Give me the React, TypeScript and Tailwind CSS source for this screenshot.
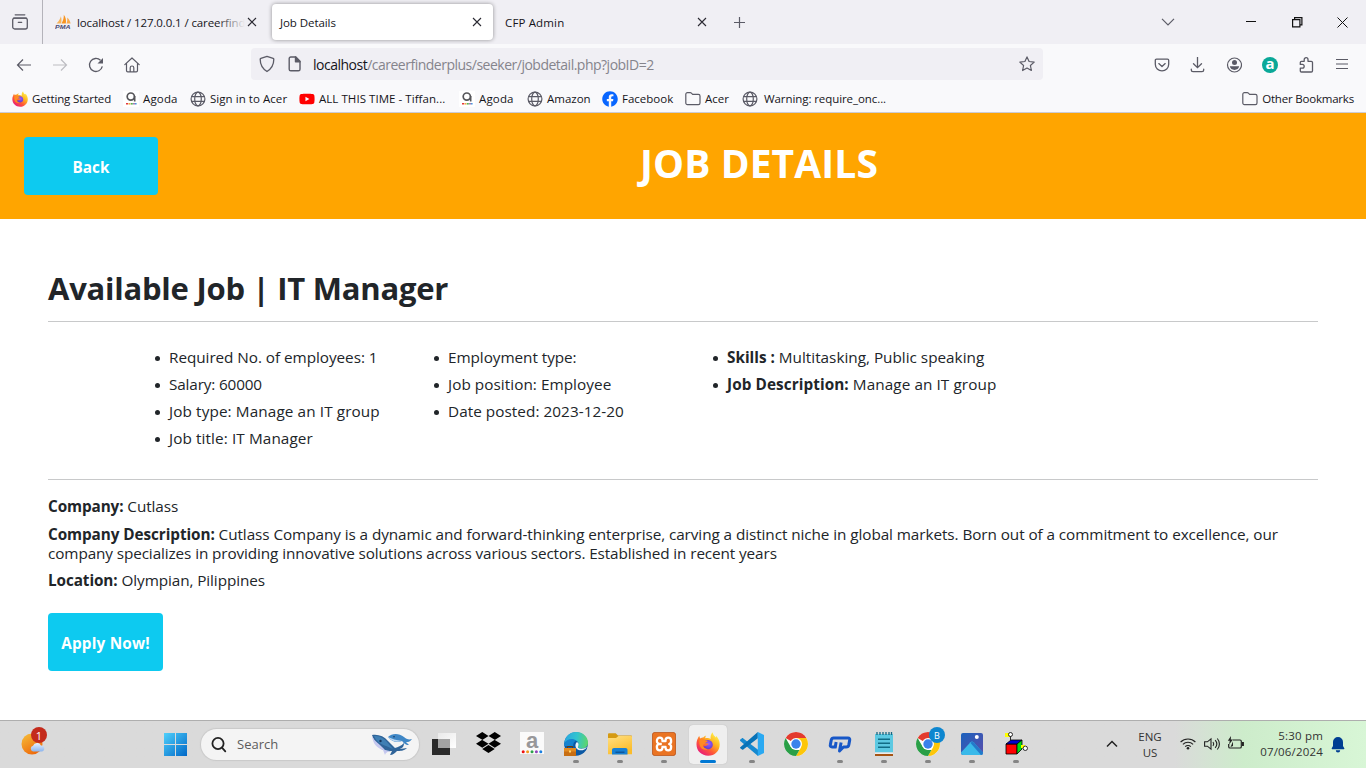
import React from 'react';
import type { ReactNode } from 'react';
import { FaDropbox, FaFacebook, FaYoutube } from 'react-icons/fa';

function Firefox({ size }: { size: number }) {
  return (
    <svg width={size} height={size} viewBox="0 0 24 24">
      <defs>
        <linearGradient id="ffBody" x1="0.85" y1="0.1" x2="0.2" y2="0.95">
          <stop offset="0" stopColor="#fff04a" />
          <stop offset="0.35" stopColor="#ffb21f" />
          <stop offset="0.65" stopColor="#ff5a36" />
          <stop offset="1" stopColor="#e8187c" />
        </linearGradient>
        <radialGradient id="ffCore" cx="0.6" cy="0.4" r="0.7">
          <stop offset="0" stopColor="#9a5cff" />
          <stop offset="1" stopColor="#5436c4" />
        </radialGradient>
      </defs>
      <path
        d="M1.8 6.6c.5-1.3 1.3-2.5 1.5-2.5.2 1 .5 1.8.9 2.300C5.300 5.500 6.300 5.400 7.200 5.400c.8-1 1.800-1.600 3-1.900-.8.9-1 1.900-.8 2.700 1.800-.3 4-.1 5.300.9-.5-2.600.2-5 1.900-6.900.3 2.400 1.700 3.600 3.300 5.200.3-.6.3-1.200.2-1.700 2.300 2.500 3.600 5.500 3.600 8.700 0 6.400-5 11.300-11.500 11.300S.5 19 .5 12.500c0-2.100.4-4.200 1.300-5.900z"
        fill="url(#ffBody)"
      />
      <path d="M7 11.200c.4-1.900 2.300-3.500 5-3.200 3 .2 5 2.400 4.800 5-.2 2.600-2.300 4.200-4.800 4.200-2.600 0-4.600-1.500-5.100-3.500 1.200.8 2.700.6 3.800-.2.900-.7 1.200-1 2-.9-.3-1.100-1.600-1.600-2.800-1.400z" fill="url(#ffCore)" />
      <path d="M3.500 8c2-1.600 4.400-1.300 5.700.2 1.100.3 2.400.2 2.500.9-.1 1-2 1.300-2.400 2.200-.3.900-1.300 1.200-2.300 1.700.4 2.700 2.600 4 5 3.900-2 1.600-6.200 1.300-7.800-2.300C3.300 12.500 3.200 10 3.500 8z" fill="#ff8a22" />
    </svg>
  );
}

function Chrome() {
  return (
    <svg width="24" height="24" viewBox="0 0 24 24">
      <circle cx="12" cy="12" r="12" fill="#fff" />
      <path d="M12 12 1.610 6A12 12 0 0 1 22.390 6z" fill="#e33b2e" />
      <path d="M12 6h10.390A12 12 0 0 1 12 24l5.200-9z" fill="#fdc60a" />
      <path d="M1.610 6 6.800 15l5.200 3h3.460L12 24A12 12 0 0 1 1.610 6z" fill="#2a9f47" />
      <circle cx="12" cy="12" r="6" fill="#fff" />
      <circle cx="12" cy="12" r="4.700" fill="#3b82ec" />
    </svg>
  );
}

function Globe() {
  return (
    <svg width="16" height="16" viewBox="0 0 16 16" fill="none" stroke="#5b5b66" strokeWidth="1.2">
      <circle cx="8" cy="8" r="6.900" />
      <ellipse cx="8" cy="8" rx="3.300" ry="6.900" />
      <path d="M1.500 5.700h13M1.500 10.300h13" />
    </svg>
  );
}

function Folder() {
  return (
    <svg width="16" height="16" viewBox="0 0 16 16" fill="none" stroke="#5b5b66" strokeWidth="1.2" strokeLinejoin="round">
      <path d="M.8 12V3.200a1.600 1.600 0 0 1 1.600-1.600h2.800c.5 0 .9.200 1.200.5l1.200 1.200h5.800A1.600 1.600 0 0 1 15 4.900V12a1.600 1.600 0 0 1-1.600 1.600h-11A1.600 1.600 0 0 1 .8 12z" />
    </svg>
  );
}

function AgodaSmall() {
  return (
    <svg width="16" height="16" viewBox="0 0 16 16">
      <rect width="16" height="16" fill="#fff" />
      <circle cx="7.800" cy="5.600" r="3.600" fill="none" stroke="#56565a" strokeWidth="1.700" />
      <path d="M11.700 5v5.500" stroke="#56565a" strokeWidth="1.600" />
      <path d="M3 12.800h2" stroke="#e2383f" strokeWidth="1.500" />
      <path d="M5.400 12.800h2" stroke="#f2a33a" strokeWidth="1.500" />
      <path d="M7.800 12.800h2" stroke="#4eb04c" strokeWidth="1.500" />
      <path d="M10.200 12.800h1.600" stroke="#8c58a5" strokeWidth="1.500" />
      <path d="M12 12.800h1.600" stroke="#4a97dc" strokeWidth="1.500" />
    </svg>
  );
}

function PmaIcon() {
  return (
    <svg width="17" height="16" viewBox="0 0 17 16">
      <path d="M1.500 9.500C4 7 5.500 4.500 5.800 2.200c.9 2.500.9 5 .2 7.300z" fill="#f8b45a" />
      <path d="M6.500 9.500C8.300 6.500 9 3.500 8.800.8c2 2.700 2.600 6 2 8.700z" fill="#f7931e" />
      <path d="M11.500 9.500c.8-2 1-4 .6-6 2 1.700 3 3.800 3.500 6z" fill="#f9a94a" />
      <text x="0" y="14.500" fontSize="6" fontWeight="bold" fontStyle="italic" fontFamily="Liberation Sans, sans-serif" fill="#4a4a72" textLength="15.500" lengthAdjust="spacingAndGlyphs">PMA</text>
    </svg>
  );
}

function CloseX() {
  return (
    <svg width="10" height="10" viewBox="0 0 10 10" stroke="#2b2a33" strokeWidth="1.1" fill="none">
      <path d="M1 1l8 8M9 1l-8 8" />
    </svg>
  );
}

function TabBar() {
  return (
    <div className="flex h-[44px] shrink-0 bg-[#f0eff4] text-[11.5px] text-[#15141a]">
      <div className="flex w-[43px] items-center border-r border-[#b4b3ba] pl-[12px]">
        <svg width="16" height="16" viewBox="0 0 16 16" fill="none" stroke="#5b5b66" strokeWidth="1.300" strokeLinecap="round">
          <path d="M3.200.8h9.600" />
          <rect x=".7" y="4.100" width="14.600" height="10.900" rx="2" />
          <path d="M1.500 4.100h13M6.300 8.300h3.400" />
        </svg>
      </div>
      <div className="flex w-[225px] items-center pl-[12px]">
        <PmaIcon />
        <div className="relative ml-[5px] w-[168px] overflow-hidden whitespace-nowrap pt-[2px] tracking-[-0.110px]">
          localhost / 127.0.0.1 / careerfind
          <div className="absolute inset-y-0 right-0 w-[28px] bg-linear-to-r from-[#f0eff400] to-[#f0eff4]" />
        </div>
        <div className="ml-[2px]"><CloseX /></div>
      </div>
      <div className="my-[4px] ml-[4px] flex w-[221px] items-center justify-between rounded-[4px] bg-white pl-[8px] pr-[11px] shadow-[0_0_4px_rgba(0,0,0,0.4)]">
        <span className="pt-[2px] tracking-[-0.070px]">Job Details</span>
        <CloseX />
      </div>
      <div className="flex w-[214px] items-center justify-between pl-[12px]">
        <span className="pt-[2px] tracking-[0.150px]">CFP Admin</span>
        <CloseX />
      </div>
      <svg className="ml-[27px] mt-[17px]" width="12" height="12" viewBox="0 0 12 12" stroke="#5b5b66" strokeWidth="1.200"><path d="M5.500 0v11M0 5.500h11" /></svg>
      <svg className="ml-[415px] mt-[18px]" width="14" height="8" viewBox="0 0 14 8" fill="none" stroke="#5b5b66" strokeWidth="1.200"><path d="M1 .8l6 6 6-6" /></svg>
      <svg className="ml-[71px] mt-[16px]" width="11" height="11" viewBox="0 0 11 11" stroke="#111"><path d="M0 5.500h10" /></svg>
      <svg className="ml-[35px] mt-[17px]" width="11" height="11" viewBox="0 0 11 11" fill="none" stroke="#111" strokeWidth="1.200"><path d="M.6 2.600h7.300v7.300H.6zM2.600 2.600V.6h7.300v7.300H8" /></svg>
      <svg className="ml-[34px] mt-[17px]" width="11" height="11" viewBox="0 0 11 11" stroke="#111"><path d="M.5.5l10 10M10.500.5l-10 10" /></svg>
    </div>
  );
}

function NavBar() {
  return (
    <div className="flex h-[41px] shrink-0 items-center bg-[#f9f9fb]">
      <svg className="ml-[16px]" width="16" height="16" viewBox="0 0 16 16" fill="none" stroke="#5b5b66" strokeWidth="1.200"><path d="M15 8H1.500M7 2.500L1.500 8 7 13.500" /></svg>
      <svg className="ml-[20px]" width="16" height="16" viewBox="0 0 16 16" fill="none" stroke="#bdbdc2" strokeWidth="1.200"><path d="M1 8h13.500M9 2.500L14.500 8 9 13.500" /></svg>
      <svg className="ml-[20px]" width="16" height="16" viewBox="0 0 16 16" fill="none" stroke="#5b5b66" strokeWidth="1.300"><path d="M14.300 9.400A6.500 6.500 0 1 1 12.500 3.300" /><path d="M15 1v5.500H9.500z" fill="#5b5b66" stroke="none" /></svg>
      <svg className="ml-[20px]" width="16" height="16" viewBox="0 0 16 16" fill="none" stroke="#5b5b66" strokeWidth="1.200" strokeLinejoin="round" strokeLinecap="round"><path d="M.8 7.600L8 1l7.200 6.600M2.500 6.300v7.200c0 .8.500 1.300 1.300 1.300h8.400c.8 0 1.300-.5 1.300-1.300V6.300M6.200 14.500v-3.700a1.800 1.800 0 0 1 3.600 0v3.700" /></svg>
      <div className="ml-[111px] mt-[-1px] flex h-[32px] w-[792px] items-center rounded-[4px] bg-[#f0eff4] pl-[8px] pr-[8px]">
        <svg width="16" height="18" viewBox="0 0 16 18" fill="none" stroke="#5b5b66" strokeWidth="1.300" strokeLinejoin="round"><path d="M8 1.300l6.100 2.100c.5.200.7.500.7.900 0 5-1.500 9-6.800 12.200C2.700 13.300 1.200 9.300 1.200 4.300c0-.4.200-.7.700-.9z" /></svg>
        <svg className="ml-[13px]" width="14" height="16" viewBox="0 0 14 16" fill="none" stroke="#5b5b66" strokeWidth="1.400" strokeLinejoin="round"><path d="M1.200 2.600c0-1 .6-1.600 1.600-1.600h5L12 5.200v8c0 1-.6 1.600-1.600 1.600H2.800c-1 0-1.600-.6-1.600-1.600z" /><path d="M7.500 1v4.700H12z" fill="#5b5b66" /></svg>
        <div className="ml-[11px] flex-1 whitespace-nowrap pt-[2px] text-[14px] leading-[20px] tracking-[-0.500px] text-[#85848c]"><span className="text-[#15141a]">localhost</span>/careerfinderplus/seeker/jobdetail.php?jobID=2</div>
        <svg width="16" height="16" viewBox="0 0 16 16" fill="none" stroke="#5b5b66" strokeWidth="1.200" strokeLinejoin="round"><path d="M8 .9l2.100 4.600 5.100.6-3.800 3.400 1 5L8 12l-4.400 2.500 1-5L.8 6.100l5.100-.6z" /></svg>
      </div>
      <svg className="ml-[111px]" width="16" height="16" viewBox="0 0 16 16" fill="none" stroke="#5b5b66" strokeWidth="1.300" strokeLinecap="round" strokeLinejoin="round"><path d="M1.300 3.300c0-.7.500-1.200 1.200-1.200h11c.7 0 1.200.5 1.200 1.200v4c0 3.700-3 6.500-6.700 6.500s-6.700-2.800-6.700-6.500z" /><path d="M4.800 6.600L8 9.500l3.200-2.900" /></svg>
      <svg className="ml-[20px]" width="16" height="16" viewBox="0 0 16 16" fill="none" stroke="#5b5b66" strokeWidth="1.300" strokeLinecap="round"><path d="M7.500.3v10.200M3.500 6.700l4 4 4-4M1.300 12.200v.8c0 1 .7 1.700 1.700 1.700h9c1 0 1.700-.7 1.700-1.700v-.8" /></svg>
      <svg className="ml-[20px]" width="16" height="16" viewBox="0 0 16 16"><circle cx="8.500" cy="8" r="7" fill="none" stroke="#5b5b66" strokeWidth="1.200" /><circle cx="8.500" cy="5.600" r="2.500" fill="#5b5b66" /><path d="M3.800 9.300h9.400c-.4 2.200-2.300 3.600-4.700 3.600s-4.300-1.400-4.700-3.600z" fill="#5b5b66" /></svg>
      <div className="ml-[20px] flex size-[16px] items-center justify-center rounded-full bg-[#0aa898] pb-[2px] text-[15px] font-bold leading-none text-white">a</div>
      <svg className="ml-[21px]" width="15" height="16" viewBox="0 0 15 16" fill="none" stroke="#5b5b66" strokeWidth="1.300" strokeLinejoin="round"><path d="M5.200 4.300V2.600a1.900 1.900 0 0 1 3.800 0v1.700h3.300c.8 0 1.200.4 1.200 1.200v8.300c0 .8-.4 1.200-1.200 1.200H2.500c-.8 0-1.200-.4-1.200-1.200v-2.600h2a1.900 1.900 0 0 0 0-3.800h-2V5.500c0-.8.4-1.200 1.200-1.200z" /></svg>
      <svg className="ml-[21px]" width="14" height="12" viewBox="0 0 14 12" stroke="#5b5b66" strokeWidth="1.200"><path d="M1 .5h12M1 5h12M1 9.500h12" /></svg>
    </div>
  );
}

function Bookmarks() {
  return (
    <div className="flex h-[28px] shrink-0 items-center whitespace-nowrap border-b border-[#ccccd4] bg-[#f9f9fb] pl-[12px] pr-[12px] text-[11.5px] text-[#15141a]">
      <Firefox size={16} />
      <span className="ml-[4px] w-[91px] tracking-[-0.150px]">Getting Started</span>
      <AgodaSmall />
      <span className="ml-[4px] w-[47px] tracking-[0.150px]">Agoda</span>
      <Globe />
      <span className="ml-[4px] w-[89px] tracking-[0.050px]">Sign in to Acer</span>
      <FaYoutube size={16} color="#ff0000" />
      <span className="ml-[4px] w-[140px] tracking-[0.050px]">ALL THIS TIME - Tiffan...</span>
      <AgodaSmall />
      <span className="ml-[4px] w-[48px] tracking-[0.150px]">Agoda</span>
      <Globe />
      <span className="ml-[4px] w-[55px]">Amazon</span>
      <FaFacebook size={16} color="#0866ff" />
      <span className="ml-[4px] w-[63px]">Facebook</span>
      <Folder />
      <span className="ml-[4px] w-[37px]">Acer</span>
      <Globe />
      <span className="ml-[6px] tracking-[-0.080px]">Warning: require_onc...</span>
      <div className="ml-auto flex items-center gap-[4px]"><Folder /><span className="tracking-[-0.200px]">Other Bookmarks</span></div>
    </div>
  );
}

function Item({ children }: { children: ReactNode }) {
  return (
    <li className="-ml-[14px] flex items-center whitespace-nowrap">
      <span className="mr-[9px] mt-[1px] size-[5px] rounded-full bg-[#212529]" />
      <span>{children}</span>
    </li>
  );
}

function JobPage() {
  return (
    <div className="flex h-[607px] shrink-0 flex-col bg-white text-[15.3px] leading-[19px] text-[#212529]">
      <header className="flex h-[106px] items-center bg-[#ffa500] px-[24px]">
        <button className="h-[58px] w-[134px] rounded-[4px] bg-[#0dcaf0] pt-[2px] font-bold text-white">Back</button>
        <h1 className="flex-1 pb-[7px] pl-[18px] text-center text-[39px] font-bold leading-[46px] tracking-[0.100px] text-white">JOB DETAILS</h1>
      </header>
      <main className="px-[48px] pt-[50px]">
        <h2 className="h-[52px] whitespace-nowrap text-[31px] font-bold leading-[38px] tracking-[-0.240px]">Available Job | IT Manager</h2>
        <div className="h-px bg-[#c8c9ca]" />
        <div className="grid h-[157px] grid-cols-[279px_279px_400px] pl-[121px] pt-[22px]">
          <ul className="leading-[27px]">
            <Item><span className="tracking-[-0.050px]">Required No. of employees: 1</span></Item>
            <Item><span className="tracking-[-0.150px]">Salary: 60000</span></Item>
            <Item><span className="tracking-[0.110px]">Job type: Manage an IT group</span></Item>
            <Item><span className="tracking-[0.100px]">Job title: IT Manager</span></Item>
          </ul>
          <ul className="leading-[27px]">
            <Item><span className="tracking-[-0.050px]">Employment type:</span></Item>
            <Item><span className="tracking-[0.050px]">Job position: Employee</span></Item>
            <Item><span className="tracking-[0.050px]">Date posted: 2023-12-20</span></Item>
          </ul>
          <ul className="leading-[27px]">
            <Item><b>Skills :</b> Multitasking, Public speaking</Item>
            <Item><span className="tracking-[0.080px]"><b>Job Description:</b> Manage an IT group</span></Item>
          </ul>
        </div>
        <div className="h-px bg-[#c8c9ca]" />
        <p className="mt-[17px] tracking-[-0.100px]"><b>Company:</b> Cutlass</p>
        <p className="mt-[9px] whitespace-nowrap tracking-[-0.075px]"><b>Company Description:</b> Cutlass Company is a dynamic and forward-thinking enterprise, carving a distinct niche in global markets. Born out of a commitment to excellence, our<br /><span className="tracking-[-0.105px]">company specializes in providing innovative solutions across various sectors. Established in recent years</span></p>
        <p className="mt-[8px] tracking-[-0.090px]"><b>Location:</b> Olympian, Pilippines</p>
        <button className="mt-[23px] h-[58px] w-[115px] whitespace-nowrap rounded-[4px] bg-[#0dcaf0] pt-[2px] font-bold tracking-[0.200px] text-white">Apply Now!</button>
      </main>
    </div>
  );
}

function TaskItem({ children, dot, active }: { children: ReactNode; dot?: boolean; active?: boolean }) {
  return (
    <div className="flex w-[44px] justify-center pt-[4px]">
      <div className={active ? 'flex h-[39px] w-[38px] flex-col items-center rounded-[4px] bg-[#efefef] pt-[7px] shadow-[0_0_1px_#aaa]' : 'flex h-[39px] w-[38px] flex-col items-center pt-[7px]'}>
        <div className="relative size-[24px]">{children}</div>
        {active && <div className="mt-[4px] h-[3px] w-[16px] rounded-full bg-[#0078d4]" />}
        {dot && <div className="mt-[4px] h-[3px] w-[6px] rounded-full bg-[#858585]" />}
      </div>
    </div>
  );
}

function Whales() {
  return (
    <svg width="42" height="24" viewBox="0 0 42 24">
      <path d="M1 2c6-1 12 1 16 6l7 7c3-1 6-2 9-5 0 4-2 5-4 6l7-1c-3 3-7 3-10 3-2 2-4 4-7 4l2-4C13 19 5 15 1 2z" fill="#2f6499" />
      <path d="M1 3c3 6 8 8 13 14l5 1c-2 1-4 1-5 4l-2-5C6 15 2 11 1 3z" fill="#c5c8ef" />
      <path d="M3 3c5 0 9 1 13 6l6 7-7-3C9 11 5 8 3 3z" fill="#3f7fb4" />
      <circle cx="9.500" cy="8" r="1.200" fill="#15355c" />
      <path d="M17 4c4-4 11-4 16 0 2 2 5 3 8 2-2 3-4 3-6 3l3 3c-4 0-5-2-7-4-5 2-10 1-14-4z" fill="#3f87c6" />
      <path d="M17 4c4 2 8 3 14 4-5 2-11 0-14-4z" fill="#bfd8f1" />
      <circle cx="23" cy="3.800" r=".8" fill="#17375e" />
    </svg>
  );
}

function Taskbar() {
  return (
    <div className="flex h-[48px] shrink-0 border-t border-[#aeaeae] bg-linear-to-r from-[#dadada] from-[86%] via-[#cdeccb] via-[91%] to-[#d8f6d6] text-[#333]">
      <div className="relative w-[157px]">
        <svg className="ml-[21px] mt-[11px]" width="24" height="24" viewBox="0 0 24 24">
          <defs><linearGradient id="sun" x1="0" y1="0" x2="0.6" y2="1"><stop stopColor="#f6c03a" /><stop offset="1" stopColor="#ee6a0b" /></linearGradient><linearGradient id="cloud" x1="0" y1="0" x2="0" y2="1"><stop stopColor="#e9f2ff" /><stop offset="1" stopColor="#8cb5ee" /></linearGradient></defs>
          <circle cx="11" cy="12" r="10.500" fill="url(#sun)" />
          <path d="M12 19.500a3 3 0 0 1 0-5.800 4.300 4.300 0 0 1 8-.2 3 3 0 0 1 .5 6z" fill="url(#cloud)" />
        </svg>
        <div className="absolute left-[31px] top-[6px] flex size-[16px] items-center justify-center rounded-full bg-[#c42b1c] text-[11px] leading-none text-white">1</div>
      </div>
      <div className="flex w-[44px] items-center pl-[7px]">
        <svg width="23" height="23" viewBox="0 0 23 23"><defs><linearGradient id="win" x1="0" y1="0" x2="1" y2="1"><stop stopColor="#4fd0fb" /><stop offset="1" stopColor="#0067c7" /></linearGradient></defs><path d="M0 0h11v11H0zM12 0h11v11H12zM0 12h11v11H0zM12 12h11v11H12z" fill="url(#win)" /></svg>
      </div>
      <div className="mt-[8px] flex h-[31px] w-[218px] items-center rounded-full bg-[#f4f4f4] pl-[10px] pr-[6px] shadow-[0_0_1px_1px_#c9c9c9]">
        <svg width="17" height="17" viewBox="0 0 17 17" fill="none" stroke="#222" strokeWidth="1.800"><circle cx="7" cy="7.500" r="5.600" /><path d="M11 11.700l3.300 3.600" strokeLinecap="round" /></svg>
        <span className="ml-[9px] flex-1 text-[13px] text-[#5c5c5c]">Search</span>
        <div className="-ml-[4px]"><Whales /></div>
      </div>
      <div className="ml-[3px] flex">
        <TaskItem>
          <svg width="24" height="24" viewBox="0 0 24 24"><defs><linearGradient id="tv" x1="0" y1="0" x2="1" y2="1"><stop stopColor="#e9e9e9" /><stop offset="1" stopColor="#fff" /></linearGradient></defs><path d="M0 7h18v16H0z" fill="#2a2a2a" /><path d="M6 1h18v15H6z" fill="url(#tv)" /><path d="M6 7h12v9H6z" fill="#a3a3a3" /></svg>
        </TaskItem>
        <TaskItem><FaDropbox size={25} color="#000" className="-mt-[2px]" /></TaskItem>
        <TaskItem>
          <svg className="overflow-visible" width="24" height="24" viewBox="0 0 24 24">
            <rect width="24" height="22" fill="#fafafa" />
            <text x="12" y="15.500" textAnchor="middle" fontSize="22" fontWeight="bold" fontFamily="Liberation Sans, sans-serif" fill="#98989a">a</text>
            <circle cx="3.200" cy="19.700" r="1.500" fill="#e11" /><circle cx="7.600" cy="19.700" r="1.500" fill="#f29b1d" /><circle cx="12" cy="19.700" r="1.500" fill="#2ca24a" /><circle cx="16.400" cy="19.700" r="1.500" fill="#9046b8" /><circle cx="20.800" cy="19.700" r="1.500" fill="#1a7fe0" />
          </svg>
        </TaskItem>
        <TaskItem dot>
          <svg width="24" height="24" viewBox="0 0 24 24">
            <defs><linearGradient id="edgeTop" x1="0" y1="0.5" x2="1" y2="0.6"><stop stopColor="#2aa7df" /><stop offset="0.500" stopColor="#30c4cf" /><stop offset="1" stopColor="#5fd668" /></linearGradient></defs>
            <circle cx="12" cy="12" r="11.800" fill="#0c59a4" />
            <path d="M.3 11C1 4.300 6 0 12 0c7 0 12 5 12 10.500 0 4-3 6-6.500 6-3 0-4-1.200-3.500-2.200.8-1 1-3-.3-4.500C11 7 4 7.200.3 11z" fill="url(#edgeTop)" />
            <path d="M.2 12c2-5.500 9-6.500 12.300-3.200-2.500.8-3.500 3-3.300 5.200H.2z" fill="#1583d0" />
            <path d="M13 10c2 1 2 3 1 4.500-.5 1 .5 2.200 3.500 2.200 2.500 0 4-1 5.500-2-1.500 3.300-5 4-7.500 3.500-4-.8-5.500-5.500-2.500-8.200z" fill="#eef5f8" />
            <path d="M0 16h12v8H0z" fill="#c86e12" /><path d="M0 16h12v3.500H0z" fill="#e38a20" /><path d="M3.500 16v-1.500h5V16" fill="none" stroke="#6d3a0a" /><path d="M5 18.500h2v2H5z" fill="#ffd66b" />
          </svg>
        </TaskItem>
        <TaskItem dot>
          <svg width="24" height="24" viewBox="0 0 24 24"><defs><linearGradient id="fold" x1="0" y1="0" x2="0.500" y2="1"><stop stopColor="#ffe083" /><stop offset="1" stopColor="#fbbc2a" /></linearGradient></defs><path d="M0 2.500c0-.8.500-1.200 1.200-1.200h6.500L10 3.500h13c.6 0 1 .4 1 1V9H0z" fill="#d59a12" /><path d="M0 6h8l2.500-2H23c.6 0 1 .4 1 1v17.300H0z" fill="url(#fold)" /><path d="M4 22.500V18c0-1.300.8-2 2-2h11.500c1.200 0 2 .7 2 2v4.500z" fill="#1680d4" /><path d="M7.500 19.500h9V21h-9z" fill="#0c579d" /></svg>
        </TaskItem>
        <TaskItem dot>
          <svg width="24" height="24" viewBox="0 0 24 24"><rect x=".4" y=".4" width="23.200" height="23.200" rx="2.500" fill="#ea7423" stroke="#b94f13" strokeWidth=".8" /><path d="M9.800 12v0H7.900a3 3 0 0 1-3-3.200c0-1.900 1.200-3.200 2.900-3.200 1.600 0 2.700 1.200 2.700 2.800v.8h3v-.8c0-1.600 1.100-2.800 2.700-2.800 1.700 0 2.900 1.300 2.900 3.200a3 3 0 0 1-1.900 3.200 3 3 0 0 1 1.900 3.200c0 1.900-1.200 3.200-2.900 3.200-1.600 0-2.700-1.200-2.700-2.800v-.8h-3v.8c0 1.600-1.100 2.800-2.700 2.800-1.700 0-2.900-1.300-2.900-3.200A3 3 0 0 1 6.800 12" fill="none" stroke="#fff" strokeWidth="2.300" strokeLinejoin="round" /></svg>
        </TaskItem>
        <TaskItem active><Firefox size={24} /></TaskItem>
        <TaskItem dot>
          <svg width="24" height="24" viewBox="0 0 24 24"><path d="M0 7.800L2 6.300c.4-.3.900-.2 1.300.1L18 17.800V24L.3 9.100C-.1 8.700-.1 8.200 0 7.800z" fill="#1689d0" /><path d="M.3 15.200L17.800 0v6.200L3.300 17.600c-.4.300-.9.300-1.300 0L.3 16.200c-.4-.3-.4-.7 0-1z" fill="#0873b8" /><path d="M17.800 0L24 2.900v18.200L17.800 24z" fill="#2aa9f2" /></svg>
        </TaskItem>
        <TaskItem><Chrome /></TaskItem>
        <TaskItem dot>
          <svg width="24" height="24" viewBox="0 0 24 24" fill="none" stroke="#1757c7" strokeWidth="3" strokeLinejoin="round"><path d="M8.500 15H4c-1.400 0-2-.8-1.700-2.100l1-5C3.600 6.600 4.400 6 5.600 6H20c1.400 0 2 .8 1.700 2.100l-.9 4.800c-.3 1.400-1.200 2.100-2.600 2.100h-2.700l-4 4 1.600-8.500" /><path d="M7.200 15.500l.9-5.500" /></svg>
        </TaskItem>
        <TaskItem dot>
          <svg width="24" height="24" viewBox="0 0 24 24"><path d="M3 2h18v18.500H3z" fill="#5cc9e2" /><path d="M3 20.500h18V22H3z" fill="#ececec" /><path d="M3 22h18v2H3z" fill="#a65414" /><path d="M5 0v3M8 0v3M11 0v3M14 0v3M17 0v3M19.500 0v3" stroke="#176781" strokeWidth="1.300" /><path d="M6 7.200h12M6 11.200h12M6 15.200h12" stroke="#106d86" strokeWidth="1.400" /></svg>
        </TaskItem>
        <TaskItem dot><Chrome /><div className="absolute -top-[5px] left-[13px] flex size-[16px] items-center justify-center rounded-full bg-[#0d86cf] text-[9px] leading-none text-white">B</div></TaskItem>
        <TaskItem dot>
          <svg width="24" height="24" viewBox="0 0 24 24"><defs><linearGradient id="photo" x1="0" y1="0" x2="1" y2="1"><stop stopColor="#1a62bd" /><stop offset="1" stopColor="#5b4dab" /></linearGradient></defs><rect x="1" y="1" width="22" height="22" rx="2" fill="url(#photo)" /><path d="M1 20.500L10.500 10.200c.9-.9 2.100-.9 3 0L23 20.500c0 1.500-.7 2.500-2 2.500H3c-1.200 0-2-1-2-2.500z" fill="#39b9e9" /><path d="M12 9.500c.5 0 1 .2 1.500.7L23 20.500c0 1.500-.7 2.500-2 2.500L10.500 11z" fill="#2479ca" /><circle cx="16.800" cy="5" r="2" fill="#fff" /></svg>
        </TaskItem>
        <TaskItem dot>
          <svg width="24" height="24" viewBox="0 0 24 24" stroke="#000" strokeWidth=".8"><path d="M2 12h11v10H2z" fill="#f00" /><path d="M2 12l5-4h11l-5 4z" fill="#00c" /><path d="M13 12l5-4v9l-5 5z" fill="#0d1" /><path d="M6.500 8V3M17 14h3" /><path d="M1 1h5v4H1z" fill="#ff0" stroke="none" /><circle cx="6.500" cy="2.500" r="2" fill="#fff" /><path d="M17 13h4v3h-4z" fill="#ff0" stroke="none" /><circle cx="21.300" cy="16.300" r="2.200" fill="#fff" /></svg>
        </TaskItem>
      </div>
      <svg className="ml-[68px] mt-[19px]" width="12" height="8" viewBox="0 0 12 8" fill="none" stroke="#222" strokeWidth="1.500"><path d="M1 6.500l5-5 5 5" /></svg>
      <div className="ml-[19px] w-[26px] pt-[8px] text-center text-[11.500px] leading-[16px]">ENG<br />US</div>
      <svg className="ml-[17px] mt-[16px]" width="16" height="14" viewBox="0 0 16 14" fill="none" stroke="#222" strokeWidth="1.100"><path d="M.6 5a10.500 10.500 0 0 1 14.800 0M2.900 7.400a7.200 7.200 0 0 1 10.200 0M5.200 9.700a4 4 0 0 1 5.600 0" /><circle cx="8" cy="11.300" r="1.300" fill="#222" stroke="none" /></svg>
      <svg className="ml-[8px] mt-[16px]" width="17" height="14" viewBox="0 0 17 14" fill="none" stroke="#222" strokeWidth="1.100"><path d="M.6 4.800h2.800L7 1.800v10.400L3.400 9.200H.6zM9 5c.9 1.200.9 2.800 0 4M11.200 3.200c1.900 2.200 1.900 5.400 0 7.600M13.300 1.500c2.800 3.200 2.800 7.800 0 11" /></svg>
      <svg className="ml-[6px] mt-[15px]" width="17" height="14" viewBox="0 0 17 14" fill="none" stroke="#222" strokeWidth="1.200"><path d="M6 4h7c.9 0 1.300.4 1.300 1.300v5.400c0 .9-.4 1.300-1.300 1.300H3c-.9 0-1.300-.4-1.300-1.300V8" /><path d="M15 6.500h1.300v3H15" fill="#222" /><path d="M4 0L.8 4.700h2L2 8.500l4-5H3.800z" fill="#222" stroke="none" /><path d="M3.500 11L6 5.500V10z" fill="#222" stroke="none" /></svg>
      <div className="ml-[12px] w-[67px] whitespace-nowrap pt-[7px] text-right text-[11.500px] leading-[16px] tracking-[0.180px]">5:30 pm<br />07/06/2024</div>
      <svg className="ml-[8px] mt-[16px]" width="14" height="16" viewBox="0 0 14 16" fill="#003e92"><path d="M7 0a5 5 0 0 1 5 5v4l1.300 2.300c.2.500 0 .9-.5.900H1.200c-.5 0-.7-.4-.5-.9L2 9V5a5 5 0 0 1 5-5zM4.800 13.300h4.400a2.200 2.200 0 0 1-4.400 0z" /></svg>
    </div>
  );
}

export default function App() {
  return (
    <div className="flex h-[768px] w-[1366px] flex-col overflow-hidden bg-white font-['Open_Sans','Noto_Sans',sans-serif]">
      <TabBar />
      <NavBar />
      <Bookmarks />
      <JobPage />
      <Taskbar />
    </div>
  );
}
